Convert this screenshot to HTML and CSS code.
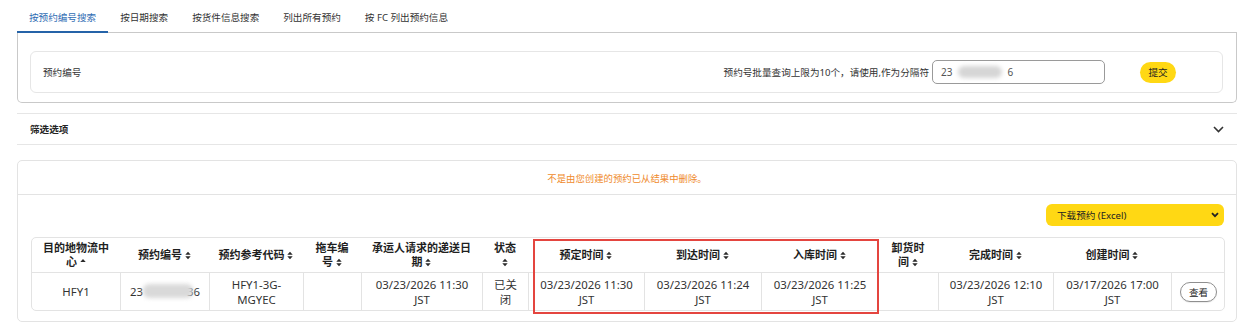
FILE: index.html
```html
<!DOCTYPE html>
<html lang="zh-CN">
<head>
<meta charset="utf-8">
<title>预约搜索</title>
<link rel="stylesheet" href="styles.css">
</head>
<body>
<div class="page">
  <nav class="tabs">
    <a class="tab active">按预约编号搜索</a>
    <a class="tab">按日期搜索</a>
    <a class="tab">按货件信息搜索</a>
    <a class="tab">列出所有预约</a>
    <a class="tab">按 FC 列出预约信息</a>
  </nav>

  <section class="search-panel">
    <div class="search-box">
      <span class="label">预约编号</span>
      <div class="search-right">
        <span class="hint">预约号批量查询上限为10个，请使用,作为分隔符</span>
        <div class="fake-input"><span>23</span><span class="blur blur-input"></span><span>6</span></div>
        <button class="submit">提交</button>
      </div>
    </div>
  </section>

  <div class="filter-row">
    <span class="filter-title">筛选选项</span>
    <svg class="chev" width="11" height="7" viewBox="0 0 11 7"><path d="M1 1 L5.5 5.5 L10 1" fill="none" stroke="#333" stroke-width="1.6"/></svg>
  </div>

  <section class="results">
    <div class="notice">不是由您创建的预约已从结果中删除。</div>
    <div class="results-body">
      <div class="toolbar">
        <div class="download">
          <span>下载预约 (Excel)</span>
          <svg width="8" height="6" viewBox="0 0 8 6"><path d="M1 1.2 L4 4.2 L7 1.2" fill="none" stroke="#222" stroke-width="1.8"/></svg>
        </div>
      </div>
      <div class="table-wrap">
        <table class="grid">
          <colgroup>
            <col class="c1"><col class="c2"><col class="c3"><col class="c4"><col class="c5"><col class="c6"><col class="c7"><col class="c8"><col class="c9"><col class="c10"><col class="c11"><col class="c12"><col class="c13">
          </colgroup>
          <thead>
            <tr>
              <th>目的地物流中心 <svg class="sort" viewBox="0 0 6 10"><path d="M0 4.4 L3 1 L6 4.4Z"/></svg></th>
              <th>预约编号 <svg class="sort" viewBox="0 0 6 10"><path d="M0 4.2 L3 0.8 L6 4.2Z M0 5.8 L3 9.2 L6 5.8Z"/></svg></th>
              <th>预约参考代码 <svg class="sort" viewBox="0 0 6 10"><path d="M0 4.2 L3 0.8 L6 4.2Z M0 5.8 L3 9.2 L6 5.8Z"/></svg></th>
              <th>拖车编号 <svg class="sort" viewBox="0 0 6 10"><path d="M0 4.2 L3 0.8 L6 4.2Z M0 5.8 L3 9.2 L6 5.8Z"/></svg></th>
              <th>承运人请求的递送日期 <svg class="sort" viewBox="0 0 6 10"><path d="M0 4.2 L3 0.8 L6 4.2Z M0 5.8 L3 9.2 L6 5.8Z"/></svg></th>
              <th>状态 <svg class="sort" viewBox="0 0 6 10"><path d="M0 4.2 L3 0.8 L6 4.2Z M0 5.8 L3 9.2 L6 5.8Z"/></svg></th>
              <th>预定时间 <svg class="sort" viewBox="0 0 6 10"><path d="M0 4.2 L3 0.8 L6 4.2Z M0 5.8 L3 9.2 L6 5.8Z"/></svg></th>
              <th>到达时间 <svg class="sort" viewBox="0 0 6 10"><path d="M0 4.2 L3 0.8 L6 4.2Z M0 5.8 L3 9.2 L6 5.8Z"/></svg></th>
              <th>入库时间 <svg class="sort" viewBox="0 0 6 10"><path d="M0 4.2 L3 0.8 L6 4.2Z M0 5.8 L3 9.2 L6 5.8Z"/></svg></th>
              <th>卸货时间 <svg class="sort" viewBox="0 0 6 10"><path d="M0 4.2 L3 0.8 L6 4.2Z M0 5.8 L3 9.2 L6 5.8Z"/></svg></th>
              <th>完成时间 <svg class="sort" viewBox="0 0 6 10"><path d="M0 4.2 L3 0.8 L6 4.2Z M0 5.8 L3 9.2 L6 5.8Z"/></svg></th>
              <th>创建时间 <svg class="sort" viewBox="0 0 6 10"><path d="M0 4.2 L3 0.8 L6 4.2Z M0 5.8 L3 9.2 L6 5.8Z"/></svg></th>
              <th></th>
            </tr>
          </thead>
          <tbody>
            <tr>
              <td>HFY1</td>
              <td class="nowrap">23<span class="blur blur-cell"></span>36</td>
              <td>HFY1-3G-MGYEC</td>
              <td></td>
              <td>03/23/2026 11:30 JST</td>
              <td>已关闭</td>
              <td>03/23/2026 11:30 JST</td>
              <td>03/23/2026 11:24 JST</td>
              <td>03/23/2026 11:25 JST</td>
              <td></td>
              <td>03/23/2026 12:10 JST</td>
              <td>03/17/2026 17:00 JST</td>
              <td><button class="view">查看</button></td>
            </tr>
          </tbody>
        </table>
        <div class="highlight"></div>
      </div>
    </div>
  </section>
</div>
</body>
</html>
```

FILE: styles.css
```css
* { box-sizing: border-box; }

html, body {
  margin: 0;
  padding: 0;
  background: #ffffff;
}

body {
  font-family: "Noto Sans", "Noto Sans CJK SC", sans-serif;
  color: #333;
  font-size: 9.6px;
}

.page {
  padding: 0 7px 0 17px;
}

/* Tabs */
.tabs {
  display: flex;
  height: 33px;
  border-bottom: 1px solid #c9c9c9;
}

.tab {
  display: flex;
  align-items: center;
  height: 33px;
  padding: 3px 12px 0 12px;
  margin-bottom: -1px;
  border-bottom: 2px solid transparent;
  font-size: 9.6px;
  color: #333;
  white-space: nowrap;
}

.tab.active {
  color: #2f6db4;
  border-bottom-color: #2563a8;
}

/* Search panel */
.search-panel {
  border: 1px solid #c9c9c9;
  border-top: none;
  border-radius: 0 0 5px 5px;
  padding: 18px 13px 9px 12px;
}

.search-box {
  height: 42px;
  border: 1px solid #e6e6e6;
  border-radius: 6px;
  display: flex;
  align-items: center;
  justify-content: space-between;
  padding: 0 46px 0 12px;
}

.label {
  font-size: 9.6px;
  color: #333;
}

.search-right {
  display: flex;
  align-items: center;
}

.hint {
  font-size: 9.6px;
  color: #333;
}

.fake-input {
  width: 173px;
  height: 24px;
  margin-left: 3px;
  border: 1px solid #9a9a9a;
  border-radius: 5px;
  display: flex;
  align-items: center;
  padding-left: 8px;
  font-size: 10px;
  color: #555;
}

.blur {
  display: inline-block;
  background: #d6d6d6;
  border-radius: 6px;
  filter: blur(2px);
}

.blur-input {
  width: 44px;
  height: 12px;
  margin: 0 5px 0 6px;
}

.submit {
  width: 36px;
  height: 21px;
  margin-left: 35px;
  border: none;
  border-radius: 11px;
  background: #ffd814;
  font-family: "Noto Sans", "Noto Sans CJK SC", sans-serif;
  font-size: 9.6px;
  color: #222;
  padding: 0;
}

/* Filter */
.filter-row {
  margin-top: 10px;
  height: 32px;
  border-top: 1px solid #e6e6e6;
  border-bottom: 1px solid #e6e6e6;
  display: flex;
  align-items: center;
  justify-content: space-between;
  padding: 0 13px 0 13px;
}

.filter-title {
  font-weight: 700;
  font-size: 9.6px;
  color: #222;
}

/* Results */
.results {
  margin-top: 15px;
  border: 1px solid #e3e3e3;
  border-radius: 5px;
}

.notice {
  height: 34px;
  border-bottom: 1px solid #e3e3e3;
  display: flex;
  align-items: center;
  justify-content: center;
  color: #ef8a2b;
  font-size: 9.4px;
}

.results-body {
  padding: 9px 13px 10px 13px;
}

.toolbar {
  display: flex;
  justify-content: flex-end;
}

.download {
  width: 178px;
  height: 22px;
  margin-right: -1px;
  background: #ffd814;
  border-radius: 6px;
  display: flex;
  align-items: center;
  justify-content: space-between;
  padding: 0 5px 0 11px;
  font-size: 9.6px;
  color: #222;
}

.table-wrap {
  position: relative;
  margin-top: 11px;
}

.grid {
  width: 100%;
  table-layout: fixed;
  border-collapse: separate;
  border-spacing: 0;
  border: 1px solid #e3e3e3;
  border-radius: 5px;
}

.c1 { width: 88px; }
.c2 { width: 89px; }
.c3 { width: 94px; }
.c4 { width: 58px; }
.c5 { width: 121px; }
.c6 { width: 46px; }
.c7 { width: 116px; }
.c8 { width: 117px; }
.c9 { width: 117px; }
.c10 { width: 60px; }
.c11 { width: 115px; }
.c12 { width: 118px; }
.c13 { width: 53px; }

.grid th {
  height: 35px;
  padding: 0 9px;
  border-bottom: 1px solid #e3e3e3;
  font-size: 11px;
  font-weight: 700;
  color: #1f1f1f;
  line-height: 14px;
  text-align: center;
  vertical-align: middle;
}

.grid td {
  height: 37px;
  padding: 0 8px;
  border-left: 1px solid #e3e3e3;
  font-size: 11.4px;
  line-height: 15px;
  color: #333;
  text-align: center;
  vertical-align: middle;
}

.grid td:first-child {
  border-left: none;
}

.grid td.nowrap {
  white-space: nowrap;
  padding: 0;
}

.sort {
  width: 6px;
  height: 9px;
  fill: #2a2a2a;
  vertical-align: -0.5px;
}

.blur-cell {
  position: relative;
  width: 50px;
  height: 14px;
  margin: 0 -6px 0 0;
  vertical-align: -2px;
  background: #d9d9d9;
}

.view {
  width: 37px;
  height: 20px;
  border: 1px solid #8f8f8f;
  border-radius: 10px;
  background: #fff;
  box-shadow: 0 1px 1px rgba(0, 0, 0, 0.08);
  font-family: "Noto Sans", "Noto Sans CJK SC", sans-serif;
  font-size: 9.6px;
  color: #222;
  padding: 0;
}

.highlight {
  position: absolute;
  left: 502px;
  top: 2px;
  width: 346px;
  height: 75px;
  border: 2px solid #e4453f;
  pointer-events: none;
}
```
